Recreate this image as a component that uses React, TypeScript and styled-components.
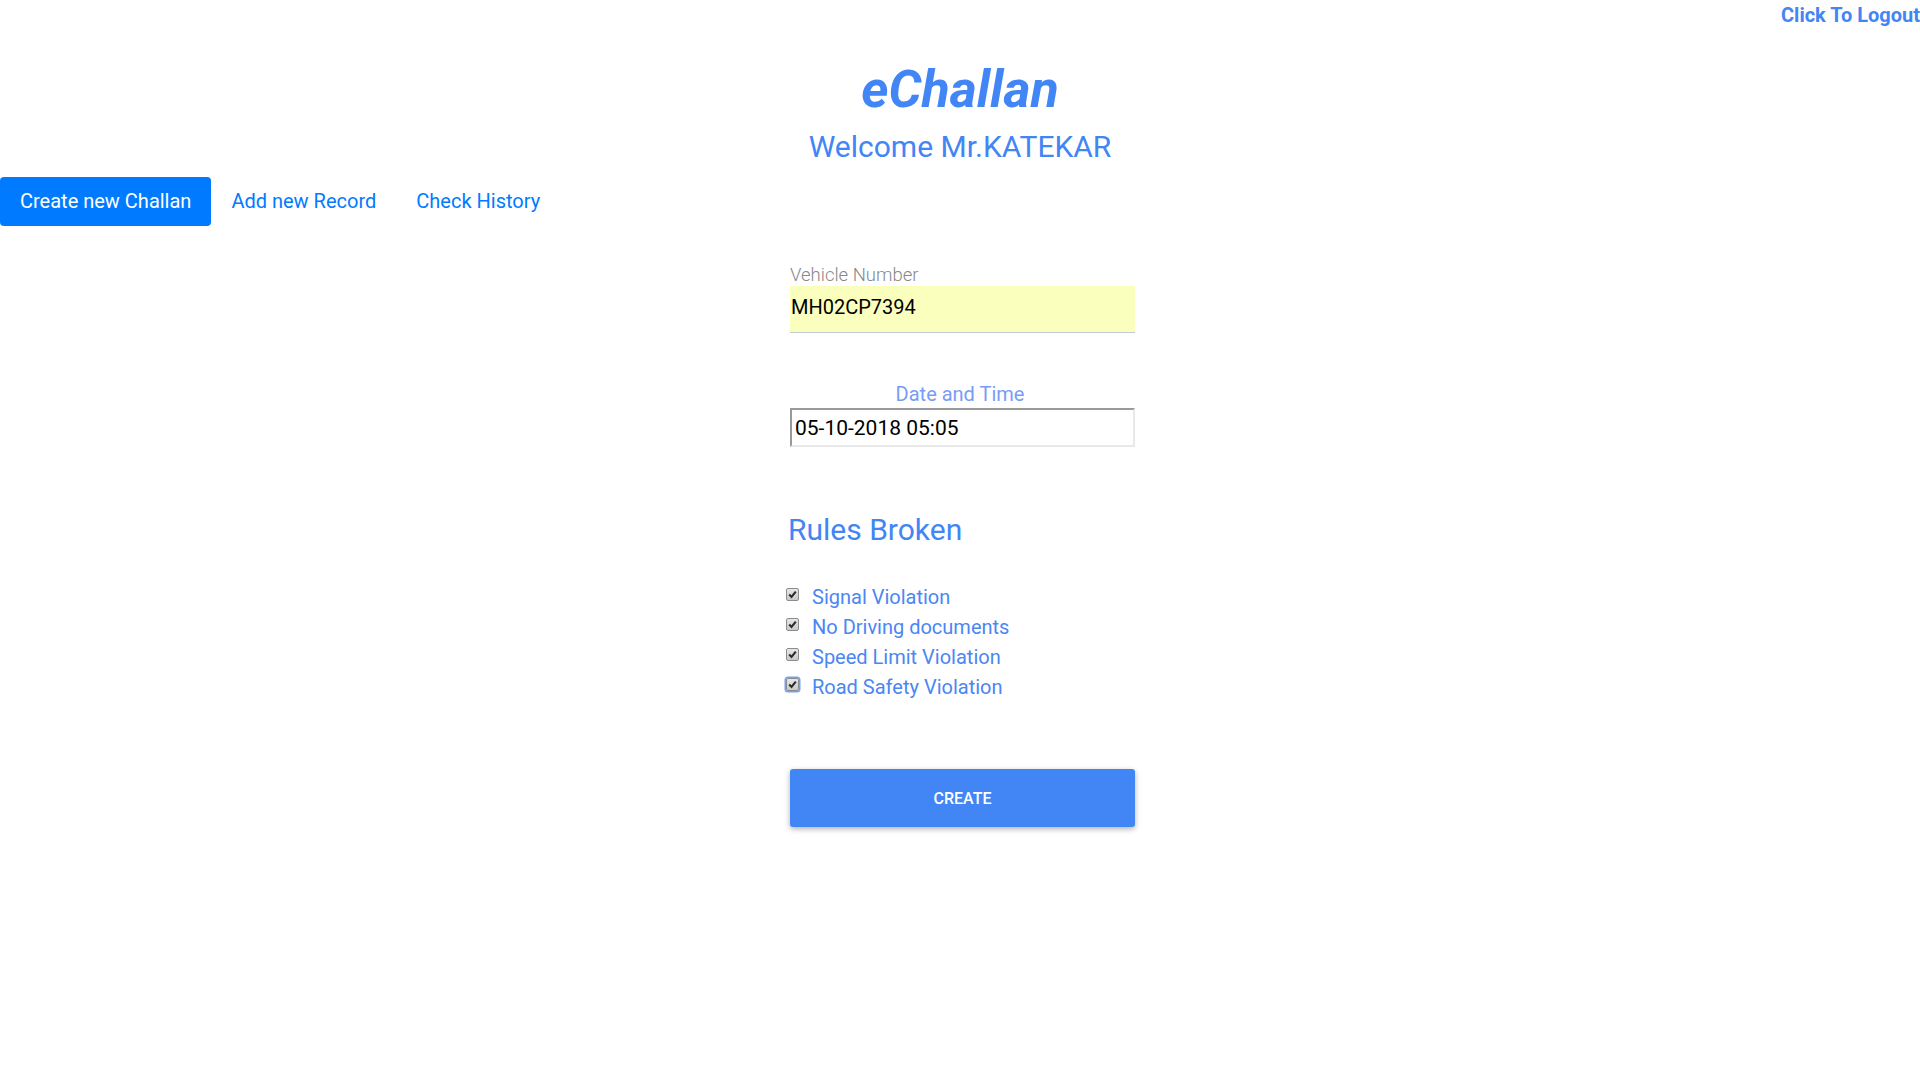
import React from "react";
import styled, { createGlobalStyle, css } from "styled-components";

const GlobalStyle = createGlobalStyle`
  html, body {
    margin: 0;
    padding: 0;
    background: #ffffff;
  }
  body {
    font-family: Roboto, "Noto Sans", "Liberation Sans", sans-serif;
    color: #212529;
  }
  * { box-sizing: border-box; }
`;

const Page = styled.div`
  display: flex;
  flex-direction: column;
  width: 1920px;
  min-height: 1080px;
`;

const TopBar = styled.div`
  display: flex;
  justify-content: flex-end;
  padding-top: 4px;
  height: 27px;
`;

const LogoutLink = styled.a`
  font-size: 20px;
  font-weight: 700;
  line-height: 23px;
  color: #4285f4;
  text-decoration: none;
  cursor: pointer;
`;

const Header = styled.header`
  display: flex;
  flex-direction: column;
  align-items: center;
  margin-top: 32px;
`;

const Title = styled.h1`
  margin: 0;
  font-size: 52px;
  line-height: 61px;
  font-weight: 700;
  font-style: italic;
  color: #4285f4;
`;

const Welcome = styled.h2`
  margin: 9px 0 0;
  font-size: 30px;
  line-height: 36px;
  font-weight: 400;
  color: #4285f4;
`;

const Nav = styled.nav`
  display: flex;
  margin-top: 12px;
`;

const NavItem = styled.a<{ $active?: boolean }>`
  display: block;
  padding: 9px 20px;
  font-size: 20px;
  line-height: 31px;
  border-radius: 4px;
  text-decoration: none;
  cursor: pointer;
  color: #007bff;
  ${(p) =>
    p.$active &&
    css`
      background: #007bff;
      color: #ffffff;
    `}
`;

const Form = styled.form`
  display: flex;
  flex-direction: column;
  width: 340px;
  margin: 38px auto 0;
`;

const Field = styled.div`
  display: flex;
  flex-direction: column;
`;

const FieldLabel = styled.label`
  font-size: 18.5px;
  line-height: 22px;
  font-weight: 300;
  color: #888888;
`;

const TextInput = styled.input`
  width: 345px;
  height: 47px;
  padding: 0 0 4px 1px;
  border: none;
  border-bottom: 1px solid #c3cad6;
  background: #faffbd;
  font-family: Roboto, "Noto Sans", sans-serif;
  font-size: 20px;
  color: #000;
  outline: none;
`;

const DateField = styled.div`
  display: flex;
  flex-direction: column;
  align-items: center;
  margin-top: 50px;
`;

const DateLabel = styled.label`
  font-size: 20px;
  line-height: 23px;
  color: #789cf6;
`;

const DateInput = styled.input`
  align-self: flex-start;
  margin-top: 2px;
  width: 345px;
  height: 39px;
  padding: 0 3px;
  border-width: 2px;
  border-style: solid;
  border-top-color: #999;
  border-left-color: #999;
  border-right-color: #e8e8e8;
  border-bottom-color: #e8e8e8;
  background: #fff;
  font-family: Roboto, "Noto Sans", sans-serif;
  font-size: 21px;
  color: #000;
  outline: none;
`;

const SectionTitle = styled.h3`
  margin: 65px 0 0 -2px;
  font-size: 30px;
  line-height: 35px;
  font-weight: 400;
  color: #4285f4;
`;

const RuleList = styled.ul`
  list-style: none;
  margin: 35px 0 0;
  padding: 0;
  display: flex;
  flex-direction: column;
`;

const RuleRow = styled.li`
  display: flex;
  align-items: center;
  height: 30px;
`;

const Box = styled.span<{ $focused?: boolean }>`
  display: inline-flex;
  align-items: center;
  justify-content: center;
  width: 13px;
  height: 13px;
  margin: -5px 0 0 -4px;
  border: 1px solid #8d8d8d;
  border-radius: 2px;
  background: linear-gradient(#e6e6e6, #c9c9c9);
  ${(p) =>
    p.$focused &&
    css`
      box-shadow: 0 0 0 1.5px #6ea2f5;
    `}
`;

const RuleLabel = styled.span`
  margin-left: 13px;
  font-size: 20px;
  line-height: 30px;
  color: #4a86f4;
`;

const CreateButton = styled.button`
  margin-top: 67px;
  width: 345px;
  height: 58px;
  border: none;
  border-radius: 3px;
  background: #4285f4;
  color: #fff;
  font-family: Roboto, "Noto Sans", sans-serif;
  font-size: 16px;
  font-weight: 500;
  box-shadow: 0 2px 5px rgba(0, 0, 0, 0.22), 0 2px 8px rgba(0, 0, 0, 0.1);
  cursor: pointer;
`;

const Check = () => (
  <svg width="9" height="9" viewBox="0 0 9 9">
    <path d="M1.2 4.6 L3.5 6.9 L7.8 1.6" fill="none" stroke="#2b2b2b" strokeWidth="2.1" />
  </svg>
);

const rules = [
  "Signal Violation",
  "No Driving documents",
  "Speed Limit Violation",
  "Road Safety Violation",
];

export default function App() {
  return (
    <Page>
      <GlobalStyle />
      <TopBar>
        <LogoutLink>Click To Logout</LogoutLink>
      </TopBar>
      <Header>
        <Title>eChallan</Title>
        <Welcome>Welcome Mr.KATEKAR</Welcome>
      </Header>
      <Nav>
        <NavItem $active>Create new Challan</NavItem>
        <NavItem>Add new Record</NavItem>
        <NavItem>Check History</NavItem>
      </Nav>
      <Form onSubmit={(e) => e.preventDefault()}>
        <Field>
          <FieldLabel>Vehicle Number</FieldLabel>
          <TextInput defaultValue="MH02CP7394" />
        </Field>
        <DateField>
          <DateLabel>Date and Time</DateLabel>
          <DateInput defaultValue="05-10-2018 05:05" />
        </DateField>
        <SectionTitle>Rules Broken</SectionTitle>
        <RuleList>
          {rules.map((r, i) => (
            <RuleRow key={r}>
              <Box $focused={i === rules.length - 1}>
                <Check />
              </Box>
              <RuleLabel>{r}</RuleLabel>
            </RuleRow>
          ))}
        </RuleList>
        <CreateButton type="submit">CREATE</CreateButton>
      </Form>
    </Page>
  );
}
